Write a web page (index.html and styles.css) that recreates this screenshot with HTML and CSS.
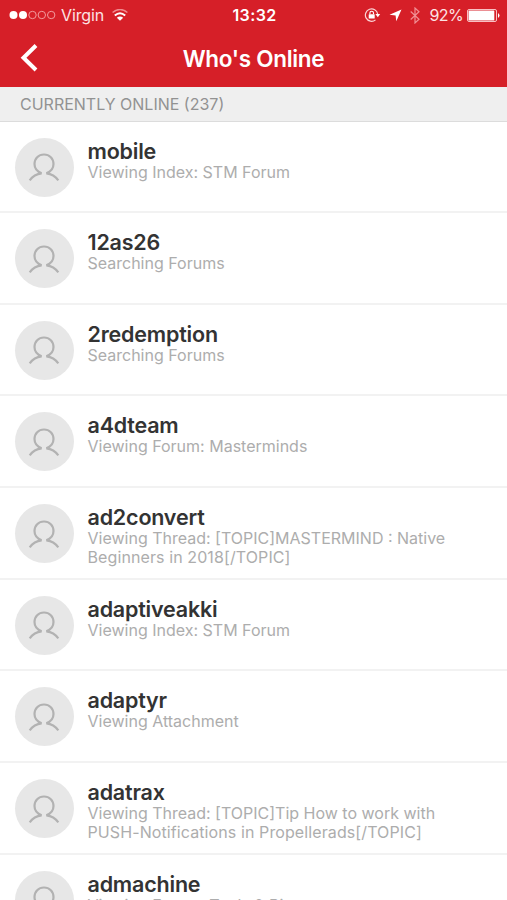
FILE: index.html
```html
<!DOCTYPE html>
<html lang="en">
<head>
<meta charset="utf-8">
<title>Who's Online</title>
<link rel="stylesheet" href="styles.css">
</head>
<body>
<svg class="defs" width="0" height="0">
<symbol id="person" viewBox="0 0 32 28"><path d="M1.700 27.300C4.500 23.300 8.500 20.800 13.600 20.300C9 18.500 6.500 15 6.500 11C6.500 5.500 10.500 1.500 16 1.500S25.500 5.500 25.500 11C25.500 15 23 18.500 18.400 20.300C23.500 20.800 27.500 23.300 30.300 27.300" fill="none" stroke="#b2b2b2" stroke-width="2.200" stroke-linejoin="bevel"/></symbol>
</svg>
<header class="top">
<div class="status">
<div class="carrier">
<svg class="dots" width="47" height="10" viewBox="0 0 47 10"><g fill="#fff"><circle cx="4.500" cy="5" r="4"/><circle cx="14" cy="5" r="4"/></g><g fill="none" stroke="#f39a9e" stroke-width="1"><circle cx="23.500" cy="5" r="3.700"/><circle cx="32.800" cy="5" r="3.700"/><circle cx="42.200" cy="5" r="3.700"/></g></svg>
<span class="network">Virgin</span>
<svg class="wifi" width="16" height="12" viewBox="0 0 16 12"><path d="M.6 3.500Q8-2.500 15.400 3.500" fill="none" stroke="#ef8a8f" stroke-width="1.500"/><path d="M2.800 6.500Q8 2 13.200 6.500" fill="none" stroke="#fff" stroke-width="2"/><path d="M4.800 8.800Q8 6 11.200 8.800L8 11.800z" fill="#fff"/></svg>
</div>
<span class="time">13:32</span>
<div class="indicators">
<svg class="lock" width="17" height="14" viewBox="0 0 17 14"><path d="M11.500 11.900A6.200 6.200 0 1 1 13.700 6" fill="none" stroke="#fbd5d7" stroke-width="1.200"/><path d="M11.400 6h4.800l-2.400 3.200z" fill="#fff"/><rect x="4.700" y="6.200" width="6" height="4.300" rx=".5" fill="#fff"/><path d="M5.900 6.300V5a1.800 1.800 0 0 1 3.600 0v1.300" fill="none" stroke="#fff" stroke-width="1.100"/></svg>
<svg class="arrow" width="13" height="13" viewBox="0 0 13 13"><path d="M12.500.5L7.300 12.300 6.600 6.500.5 5.700z" fill="#fff"/></svg>
<svg class="bluetooth" width="10" height="17" viewBox="0 0 10 17"><path d="M.7 4.500L9 12.300 5 16V1l4 3.700L.7 12.500" fill="none" stroke="#f08f94" stroke-width="1.200"/></svg>
<span class="percent">92%</span>
<svg class="battery" width="33" height="13" viewBox="0 0 33 13"><rect x=".5" y=".5" width="29" height="12" rx="1.500" fill="none" stroke="#f9c0c3"/><rect x="1.500" y="1.500" width="25.800" height="10" rx=".5" fill="#fff"/><path d="M31 4q3 2.500 0 5z" fill="#fff"/></svg>
</div>
</div>
<nav class="nav">
<svg class="back" width="18" height="28" viewBox="0 0 18 28"><path d="M16 1.500L3.500 13.700 16 26" fill="none" stroke="#fff" stroke-width="4"/></svg>
<h1 class="title">Who's Online</h1>
</nav>
</header>
<h2 class="section">CURRENTLY ONLINE (237)</h2>
<main class="list">
<article class="row"><div class="avatar"><svg><use href="#person"/></svg></div><div class="info"><h3>mobile</h3><p>Viewing Index: STM Forum</p></div></article>
<article class="row"><div class="avatar"><svg><use href="#person"/></svg></div><div class="info"><h3>12as26</h3><p>Searching Forums</p></div></article>
<article class="row"><div class="avatar"><svg><use href="#person"/></svg></div><div class="info"><h3>2redemption</h3><p>Searching Forums</p></div></article>
<article class="row"><div class="avatar"><svg><use href="#person"/></svg></div><div class="info"><h3>a4dteam</h3><p>Viewing Forum: Masterminds</p></div></article>
<article class="row"><div class="avatar"><svg><use href="#person"/></svg></div><div class="info"><h3>ad2convert</h3><p>Viewing Thread: [TOPIC]MASTERMIND : Native<br><span class="wide">Beginners in 2018[/TOPIC]</span></p></div></article>
<article class="row"><div class="avatar"><svg><use href="#person"/></svg></div><div class="info"><h3>adaptiveakki</h3><p>Viewing Index: STM Forum</p></div></article>
<article class="row"><div class="avatar"><svg><use href="#person"/></svg></div><div class="info"><h3>adaptyr</h3><p>Viewing Attachment</p></div></article>
<article class="row"><div class="avatar"><svg><use href="#person"/></svg></div><div class="info"><h3>adatrax</h3><p>Viewing Thread: [TOPIC]Tip How to work with<br><span class="wide">PUSH-Notifications in Propellerads[/TOPIC]</span></p></div></article>
<article class="row"><div class="avatar"><svg><use href="#person"/></svg></div><div class="info"><h3>admachine</h3><p>Viewing Forum: Tools &amp; Bi</p></div></article>
</main>
</body>
</html>
```
FILE: styles.css
```css
* { box-sizing: border-box; }
html, body { margin: 0; height: 900px; overflow: hidden; }
body { background: #fff; font-family: Inter, "Liberation Sans", sans-serif; }
h1, h2, h3, p { margin: 0; font-weight: 400; white-space: nowrap; }
svg { display: block; flex: none; }
.defs { position: absolute; }
.top { height: 87px; background: #d61f28; color: #fff; }
.status { height: 30px; display: grid; grid-template-columns: 1fr auto 1fr; align-items: center; padding: 0 7px 0 9px; font-size: 16px; line-height: 30px; }
.carrier, .indicators { display: flex; align-items: center; }
.indicators { justify-content: flex-end; }
.network { margin-left: 5px; color: #fde3e4; letter-spacing: -.1px; }
.wifi { margin-left: 8px; }
.time { font-weight: 600; letter-spacing: .4px; }
.lock { margin-right: 1px; }
.arrow { margin-left: 7px; }
.bluetooth { margin-left: 8px; }
.percent { margin-left: 9px; color: #fde3e4; letter-spacing: -.6px; }
.battery { margin-left: 4px; }
.nav { height: 57px; display: grid; grid-template-columns: 60px 1fr 60px; align-items: center; }
.back { margin-left: 20px; margin-top: -2px; }
.title { text-align: center; font-size: 22.500px; font-weight: 600; line-height: 55px; letter-spacing: -.3px; }
.section { height: 35px; padding-left: 20px; background: #efefef; border-bottom: 1px solid #dcdcdc; color: #929292; font-size: 16px; line-height: 35px; }
.list { height: 778px; overflow: hidden; }
.row { height: 91.700px; display: flex; padding: 16px 14px 0 14.500px; border-bottom: 2px solid #f2f2f2; }
.row:first-child { height: 91px; padding-top: 15.500px; }
.avatar { width: 59px; height: 59px; flex: none; border-radius: 50%; background: #e7e7e7; display: flex; align-items: center; justify-content: center; }
.avatar svg { width: 32px; height: 28px; }
.info { margin-left: 14px; }
.info h3 { color: #333; font-size: 21.500px; font-weight: 600; line-height: 27px; letter-spacing: -.2px; }
.info p { color: #adadad; font-size: 16px; line-height: 18.700px; margin-top: -2px; }
.wide { letter-spacing: .1px; }
```
